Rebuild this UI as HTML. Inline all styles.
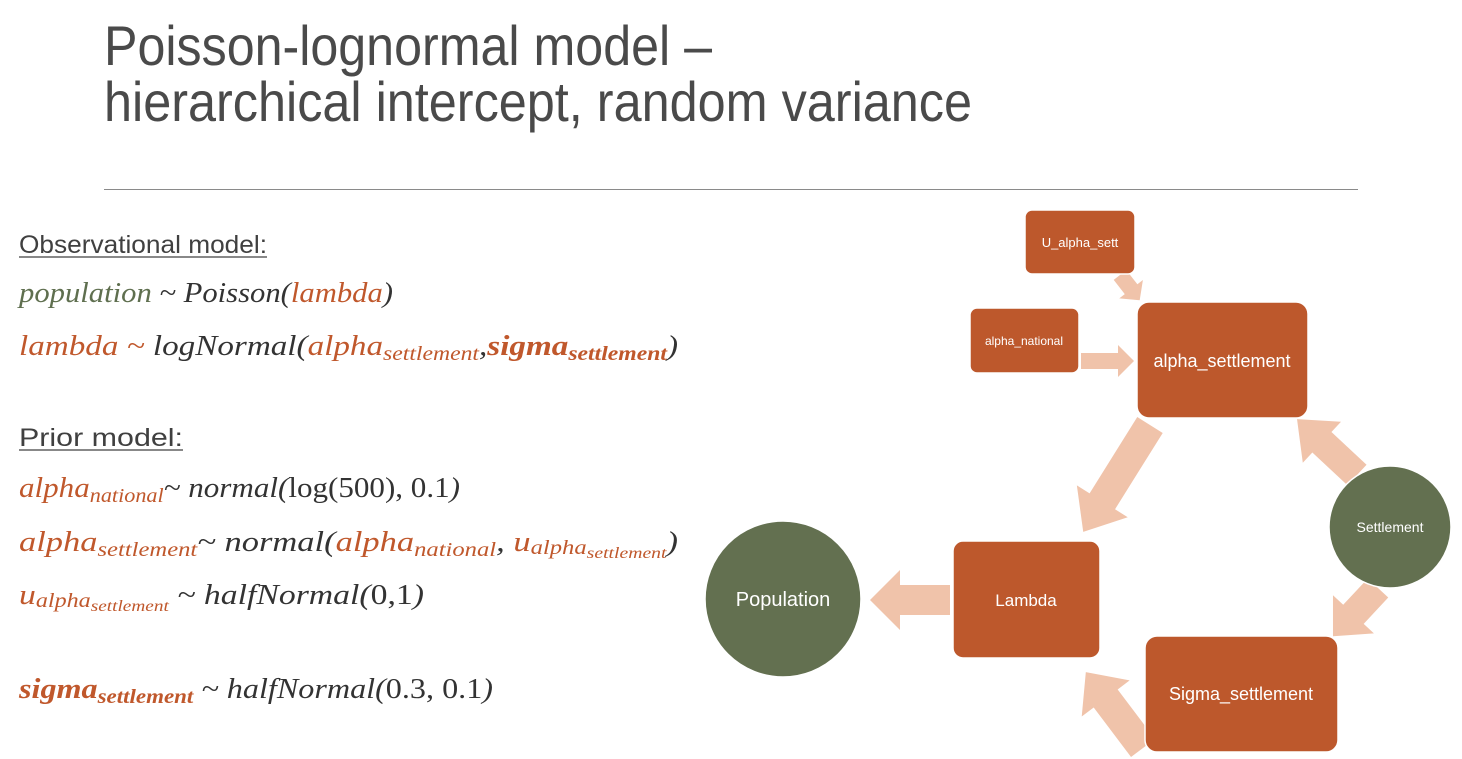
<!DOCTYPE html>
<html><head><meta charset="utf-8"><style>
html,body{margin:0;padding:0;background:#fff;}
svg{display:block;}
.m{font-family:"Liberation Serif",serif;font-style:italic;}
</style></head><body>
<svg width="1462" height="759" viewBox="0 0 1462 759" xmlns="http://www.w3.org/2000/svg">
<rect width="1462" height="759" fill="#fff"/>
<g font-family="Liberation Sans, sans-serif" fill="#4a4a4a" font-size="56">
<text x="104" y="65" textLength="608" lengthAdjust="spacingAndGlyphs">Poisson-lognormal model –</text>
<text x="104" y="121" textLength="868" lengthAdjust="spacingAndGlyphs">hierarchical intercept, random variance</text>
</g>
<line x1="104" y1="189.5" x2="1358" y2="189.5" stroke="#8a8a8a" stroke-width="1"/>

<g font-family="Liberation Sans, sans-serif" fill="#404040" font-size="25">
<text x="19" y="253" textLength="248" lengthAdjust="spacingAndGlyphs">Observational model:</text>
<line x1="19" y1="257" x2="267" y2="257" stroke="#404040" stroke-width="1.2"/>
<text x="19" y="446" textLength="164" lengthAdjust="spacingAndGlyphs">Prior model:</text>
<line x1="19" y1="450" x2="183" y2="450" stroke="#404040" stroke-width="1.2"/>
</g>

<g class="m" font-size="28" fill="#333">
<text x="19" y="302" textLength="374" lengthAdjust="spacingAndGlyphs"><tspan fill="#5f6f4f">population</tspan> ~ Poisson(<tspan fill="#c0582c">lambda</tspan>)</text>
<text x="19" y="355" textLength="659" lengthAdjust="spacingAndGlyphs"><tspan fill="#c0582c">lambda ~ </tspan>logNormal(<tspan fill="#c0582c">alpha<tspan font-size="20" dy="5">settlement</tspan></tspan><tspan dy="-5">,</tspan><tspan fill="#c0582c" font-weight="bold">sigma<tspan font-size="20" dy="5">settlement</tspan></tspan><tspan dy="-5">)</tspan></text>
<text x="19" y="497" textLength="441" lengthAdjust="spacingAndGlyphs"><tspan fill="#c0582c">alpha<tspan font-size="20" dy="5">national</tspan></tspan><tspan dy="-5">~ normal(</tspan><tspan font-style="normal">log(500), 0.1</tspan>)</text>
<text x="19" y="551" textLength="659" lengthAdjust="spacingAndGlyphs"><tspan fill="#c0582c">alpha<tspan font-size="20" dy="5">settlement</tspan></tspan><tspan dy="-5">~ normal(</tspan><tspan fill="#c0582c">alpha<tspan font-size="20" dy="5">national</tspan></tspan><tspan dy="-5">,  </tspan><tspan fill="#c0582c">u<tspan font-size="20" dy="3">alpha</tspan><tspan font-size="16" dy="4">settlement</tspan></tspan><tspan dy="-7">)</tspan></text>
<text x="19" y="604" textLength="405" lengthAdjust="spacingAndGlyphs"><tspan fill="#c0582c">u<tspan font-size="20" dy="3">alpha</tspan><tspan font-size="16" dy="4">settlement</tspan></tspan><tspan dy="-7"> ~ halfNormal(</tspan><tspan font-style="normal">0,1</tspan>)</text>
<text x="19" y="698" textLength="474" lengthAdjust="spacingAndGlyphs"><tspan fill="#c0582c" font-weight="bold">sigma<tspan font-size="20" dy="5">settlement</tspan></tspan><tspan dy="-5"> ~ halfNormal(</tspan><tspan font-style="normal">0.3, 0.1</tspan>)</text>
</g>

<g fill="#f0c3aa">
<polygon points="950,585 900,585 900,570 870,600 900,630 900,615 950,615"/>
<polygon points="1081,353 1118,353 1118,345 1134,361 1118,377 1118,369 1081,369"/>
<g transform="translate(1120,275) rotate(52)"><polygon points="0,-8 18,-8 18,-15 32,0 18,15 18,8 0,8"/></g>
<g transform="translate(1150,425) rotate(122)"><polygon points="0,-15 90,-15 90,-30 126,0 90,30 90,15 0,15"/></g>
<g transform="translate(1357,475) rotate(-137)"><polygon points="0,-14 48,-14 48,-28 82,0 48,28 48,14 0,14"/></g>
<g transform="translate(1378,588) rotate(133)"><polygon points="0,-14 36,-14 36,-28 66,0 36,28 36,14 0,14"/></g>
<g transform="translate(1143,748) rotate(-127)"><polygon points="0,-15 62,-15 62,-30 95,0 62,30 62,15 0,15"/></g>
</g>

<g fill="#bd582c" stroke="#fff" stroke-width="1.5">
<rect x="1025" y="210" width="110" height="64" rx="7"/>
<rect x="970" y="308" width="109" height="65" rx="7"/>
<rect x="1137" y="302" width="171" height="116" rx="12"/>
<rect x="953" y="541" width="147" height="117" rx="10"/>
<rect x="1145" y="636" width="193" height="116" rx="12"/>
</g>
<g fill="#637050" stroke="#fff" stroke-width="1.5">
<circle cx="783" cy="599" r="78"/>
<circle cx="1390" cy="527" r="61"/>
</g>
<g font-family="Liberation Sans, sans-serif" fill="#fff" text-anchor="middle">
<text x="1080" y="247" font-size="13">U_alpha_sett</text>
<text x="1024" y="345" font-size="12">alpha_national</text>
<text x="1222" y="367" font-size="18">alpha_settlement</text>
<text x="1026" y="606" font-size="17">Lambda</text>
<text x="1241" y="700" font-size="18">Sigma_settlement</text>
<text x="783" y="606" font-size="20">Population</text>
<text x="1390" y="532" font-size="14">Settlement</text>
</g>
</svg>
</body></html>
